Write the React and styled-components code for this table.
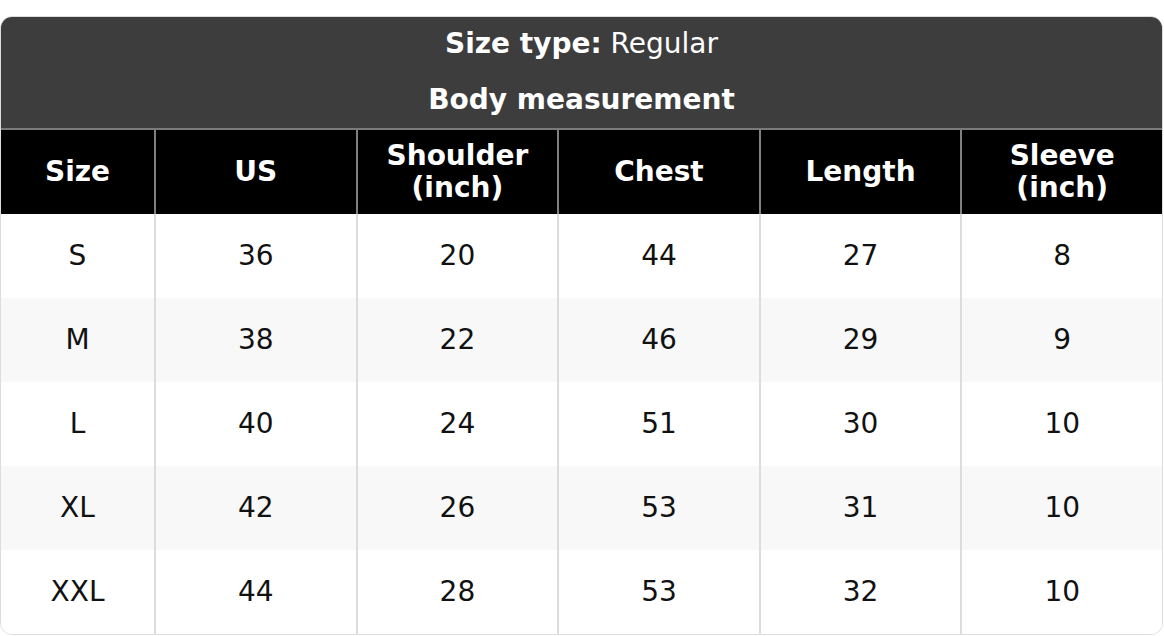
import React from 'react';
import styled, { createGlobalStyle } from 'styled-components';

const GlobalStyle = createGlobalStyle`
	* {
		box-sizing: border-box;
	}
	body {
		margin: 0;
		background: #fff;
		font-family: 'DejaVu Sans', 'Liberation Sans', sans-serif;
	}
`;

const Page = styled.main`
	padding-top: 16px;
`;

const Card = styled.section`
	width: 1163px;
	border: 1px solid #dcdcdc;
	border-radius: 12px;
	overflow: hidden;
	background: #fff;
`;

const Banner = styled.header`
	display: flex;
	flex-direction: column;
	align-items: center;
	gap: 24px;
	padding: 11px 0 12px;
	background: #3d3d3d;
	color: #fff;
	border-bottom: 2px solid #7a7a7a;
`;

const BannerLine = styled.div`
	font-size: 28px;
	line-height: 32px;
	font-weight: ${p => (p.$bold ? 700 : 400)};

	b {
		font-weight: 700;
	}
`;

const Row = styled.div`
	display: grid;
	grid-template-columns: 153px repeat(5, 1fr);
	height: 84px;
	background: ${p => (p.$head ? '#000' : p.$striped ? '#f8f8f8' : '#fff')};
	color: ${p => (p.$head ? '#fff' : '#111')};
`;

const Cell = styled.div`
	display: flex;
	align-items: center;
	justify-content: center;
	text-align: center;
	font-size: 28px;
	line-height: 32px;
	font-weight: ${p => (p.$head ? 700 : 400)};
	border-left: 2px solid ${p => (p.$head ? '#808080' : '#dcdcdc')};

	&:first-child {
		border-left: none;
	}
`;

const columns = [['Size'], ['US'], ['Shoulder', '(inch)'], ['Chest'], ['Length'], ['Sleeve', '(inch)']];

const sizes = [
	['S', 36, 20, 44, 27, 8],
	['M', 38, 22, 46, 29, 9],
	['L', 40, 24, 51, 30, 10],
	['XL', 42, 26, 53, 31, 10],
	['XXL', 44, 28, 53, 32, 10],
];

function App() {
	return (
		<Page>
			<GlobalStyle />
			<Card>
				<Banner>
					<BannerLine>
						<b>Size type:</b> Regular
					</BannerLine>
					<BannerLine $bold>Body measurement</BannerLine>
				</Banner>
				<Row $head>
					{columns.map(lines => (
						<Cell $head key={lines[0]}>
							<span>
								{lines.map((line, i) => (
									<React.Fragment key={line}>
										{i > 0 && <br />}
										{line}
									</React.Fragment>
								))}
							</span>
						</Cell>
					))}
				</Row>
				{sizes.map((row, i) => (
					<Row key={row[0]} $striped={i % 2 === 1}>
						{row.map((value, j) => (
							<Cell key={j}>{value}</Cell>
						))}
					</Row>
				))}
			</Card>
		</Page>
	);
}

export default App;
